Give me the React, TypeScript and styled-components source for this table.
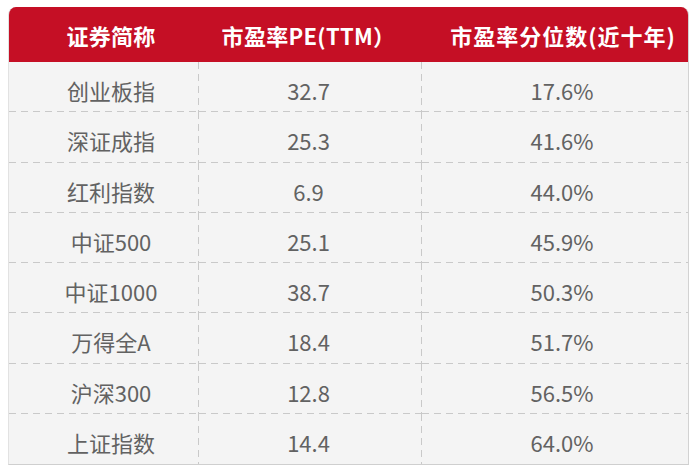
import styled, { createGlobalStyle } from 'styled-components';

const GlobalStyle = createGlobalStyle`
  html, body {
    margin: 0;
    padding: 0;
    background: #ffffff;
  }
  body {
    font-family: "Noto Sans CJK SC", "Noto Sans", sans-serif;
  }
`;

const Page = styled.main`
  padding: 7px 11px 0 8px;
`;

const Table = styled.div`
  display: grid;
  grid-template-columns: 190px 223px 1fr;
  grid-template-rows: 55px;
  grid-auto-rows: 50.25px;
  width: 681px;
  border-radius: 8px 8px 0 0;
  overflow: hidden;
  background-color: #f4f4f4;
  border-left: 1px solid #e2e2e2;
  border-right: 1px solid #d2d2d2;
  border-bottom: 1px solid #cfcfcf;
  box-sizing: border-box;
`;

const HeadCell = styled.div<{ $shift: number; $spacing: number }>`
  display: flex;
  align-items: center;
  justify-content: center;
  background-color: #c50f25;
  color: #ffffff;
  font-size: 22px;
  font-weight: 700;
  letter-spacing: ${({ $spacing }) => $spacing}px;
  padding-left: ${({ $shift }) => ($shift > 0 ? $shift * 2 : 0)}px;
  padding-right: ${({ $shift }) => ($shift < 0 ? -$shift * 2 : 0)}px;
  white-space: nowrap;
`;

const dash = '#c9c9c9';

const Cell = styled.div<{ $shift: number; $lastCol: boolean; $lastRow: boolean }>`
  display: flex;
  align-items: center;
  justify-content: center;
  padding-top: 6px;
  padding-left: ${({ $shift }) => ($shift > 0 ? $shift * 2 : 0)}px;
  padding-right: ${({ $shift }) => ($shift < 0 ? -$shift * 2 : 0)}px;
  color: #626262;
  font-size: 22px;
  font-weight: 400;
  background-image: ${({ $lastRow }) =>
      $lastRow
        ? 'none'
        : `repeating-linear-gradient(to right, ${dash} 0 7px, transparent 7px 12px)`},
    ${({ $lastCol }) =>
      $lastCol
        ? 'none'
        : `repeating-linear-gradient(to bottom, ${dash} 0 7px, transparent 7px 12px)`};
  background-size: 100% 1px, 1px 100%;
  background-position: left bottom, right top;
  background-repeat: no-repeat;
`;

const headers = [
  { text: '证券简称', shift: 7, spacing: 0.3 },
  { text: '市盈率PE(TTM）', shift: -2, spacing: 0.3 },
  { text: '市盈率分位数(近十年)', shift: 8, spacing: 1 },
];
const shifts = [7, -2, 7];

const rows: [string, string, string][] = [
  ['创业板指', '32.7', '17.6%'],
  ['深证成指', '25.3', '41.6%'],
  ['红利指数', '6.9', '44.0%'],
  ['中证500', '25.1', '45.9%'],
  ['中证1000', '38.7', '50.3%'],
  ['万得全A', '18.4', '51.7%'],
  ['沪深300', '12.8', '56.5%'],
  ['上证指数', '14.4', '64.0%'],
];

const App = () => {
  return (
    <>
      <GlobalStyle />
      <Page>
        <Table>
          {headers.map((h) => (
            <HeadCell key={h.text} $shift={h.shift} $spacing={h.spacing}>
              {h.text}
            </HeadCell>
          ))}
          {rows.map((row, r) =>
            row.map((value, c) => (
              <Cell
                key={`${r}-${c}`}
                $shift={shifts[c]}
                $lastCol={c === row.length - 1}
                $lastRow={r === rows.length - 1}
              >
                {value}
              </Cell>
            ))
          )}
        </Table>
      </Page>
    </>
  );
};

export default App;
